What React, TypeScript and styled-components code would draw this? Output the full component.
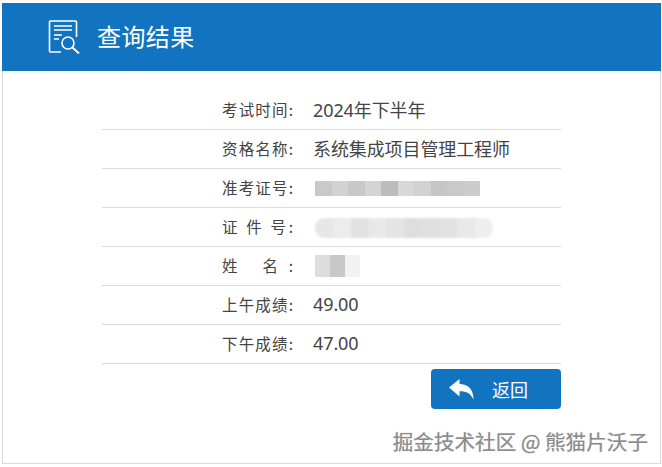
import React from "react";
import styled, { createGlobalStyle } from "styled-components";

const Global = createGlobalStyle`
  html, body { margin: 0; padding: 0; background: #fff; }
  body { font-family: "Liberation Sans", "Noto Sans CJK SC", sans-serif; }
`;
const Page = styled.div`
  width: 662px; height: 467px; box-sizing: border-box; padding: 3px 2px 0 2px; position: relative; overflow: hidden;
`;
const Card = styled.div`
  width: 659px; height: 461px; box-sizing: border-box;
  border: 1px solid #d9d9d9; border-top: 0; display: flex; flex-direction: column;
`;
const Header = styled.header`
  height: 68px; margin: 0 -1px; background: #1274c0; display: flex; align-items: center; padding-left: 46px; gap: 17px; flex-shrink: 0;
`;
const HeaderTitle = styled.h1`
  margin: 0 0 2px; color: #fff; font-size: 24px; letter-spacing: .4px; font-weight: 400; line-height: 66px;
  font-family: "Noto Sans CJK SC", sans-serif;
`;
const Table = styled.div`
  width: 459px; margin: 20px 0 0 99px; display: flex; flex-direction: column;
`;
const Row = styled.div`
  height: 39px; box-sizing: border-box; border-bottom: 1px solid #dcdcdc; display: flex; align-items: center; padding: 0 0 2px 120px; gap: 20px;
`;
const Label = styled.span`
  width: 71px; font-size: 15.5px; color: #444; text-align: justify; text-align-last: justify; white-space: pre-wrap;
  font-family: "Noto Sans CJK SC", sans-serif;
`;
const Value = styled.span`
  font-size: 18px; color: #444; font-family: "Noto Sans", "Noto Sans CJK SC", sans-serif; letter-spacing: -.1px;
`;
const Masked = styled.div<{ $w: number; $h: number; $o?: number; $r?: number; $b?: number }>`
  display: flex; width: ${p => p.$w}px; height: ${p => p.$h}px; margin: ${p => p.$o ?? 0}px 0 0 2px;
  border-radius: ${p => p.$r ?? 0}px; overflow: hidden; filter: blur(${p => p.$b ?? 0}px);
`;
const Cell = styled.i<{ $tone: string; $grow: number }>`
  display: block; flex: ${p => p.$grow} 0 0; background: ${p => p.$tone};
`;
const Footer = styled.div`
  width: 459px; margin: 5px 0 0 99px; display: flex; justify-content: flex-end;
`;
const BackButton = styled.button`
  width: 130px; height: 40px; border: 0; border-radius: 4px; background: #1274c0; color: #fff;
  display: flex; align-items: center; padding: 0 0 0 18px; gap: 18px; font-size: 18px;
  font-family: "Noto Sans CJK SC", sans-serif;
`;
const Watermark = styled.div`
  position: absolute; right: 14px; top: 428px; font-size: 20.6px; line-height: 26px; color: #8c8c8c; white-space: nowrap;
  font-family: "Noto Sans CJK SC", sans-serif;
  text-shadow: 1px 1px 1px rgba(255,255,255,.9), 0 0 1px rgba(90,90,90,.6);
`;

const ReportIcon = () => (
  <svg width="32" height="34" viewBox="0 0 32 34" fill="none" stroke="#fff" strokeWidth="1.6">
    <path d="M13 32H2.5a1 1 0 0 1-1-1V2a1 1 0 0 1 1-1H27.5a1 1 0 0 1 1 1V17" />
    <path d="M6 6H24M6 10H24M6 15H14M6 19H11" />
    <circle cx="20" cy="23" r="6" />
    <path d="M24.5 27.5L31 33.5" strokeWidth="2" />
  </svg>
);
const BackIcon = () => (
  <svg width="25" height="21" viewBox="0 0 25 21" fill="#fff">
    <path d="M0 8.5L10.5 0v5C18.5 5 24.5 9.5 24.5 20.5 21.5 14.5 18 12.3 10.5 12.3V17.5z" />
  </svg>
);

const idTones = ["#c9c9c9","#d2d2d2","#c8c8c8","#d4d4d4","#bcbcbc","#d8d8d8","#d2d2d2","#c6c6c6","#c9c9c9","#cccccc"];
const certTones = ["#e6e6e6","#ececec","#e2e2e2","#e8e8e8","#e4e4e4","#dedede","#e0e0e0","#e2e2e2","#e8e8e8","#eeeeee"];

export default function App() {
  return (
    <Page>
      <Global />
      <Card>
        <Header>
          <ReportIcon />
          <HeaderTitle>查询结果</HeaderTitle>
        </Header>
        <Table>
          <Row><Label>考试时间:</Label><Value>2024年下半年</Value></Row>
          <Row><Label>资格名称:</Label><Value>系统集成项目管理工程师</Value></Row>
          <Row>
            <Label>准考证号:</Label>
            <Masked $w={165} $h={15} $o={2}>{idTones.map((t, i) => <Cell key={i} $tone={t} $grow={1} />)}</Masked>
          </Row>
          <Row>
            <Label>证 件 号:</Label>
            <Masked $w={178} $h={20} $o={3} $r={9} $b={1}>{certTones.map((t, i) => <Cell key={i} $tone={t} $grow={1} />)}</Masked>
          </Row>
          <Row>
            <Label>姓 名:</Label>
            <Masked $w={45} $h={22} $o={2}>
              <Cell $tone="#dddddd" $grow={15} />
              <Cell $tone="#c8c8c8" $grow={15} />
              <Cell $tone="#f2f2f2" $grow={15} />
            </Masked>
          </Row>
          <Row><Label>上午成绩:</Label><Value>49.00</Value></Row>
          <Row><Label>下午成绩:</Label><Value>47.00</Value></Row>
        </Table>
        <Footer>
          <BackButton><BackIcon />返回</BackButton>
        </Footer>
      </Card>
      <Watermark>掘金技术社区 @ 熊猫片沃子</Watermark>
    </Page>
  );
}
